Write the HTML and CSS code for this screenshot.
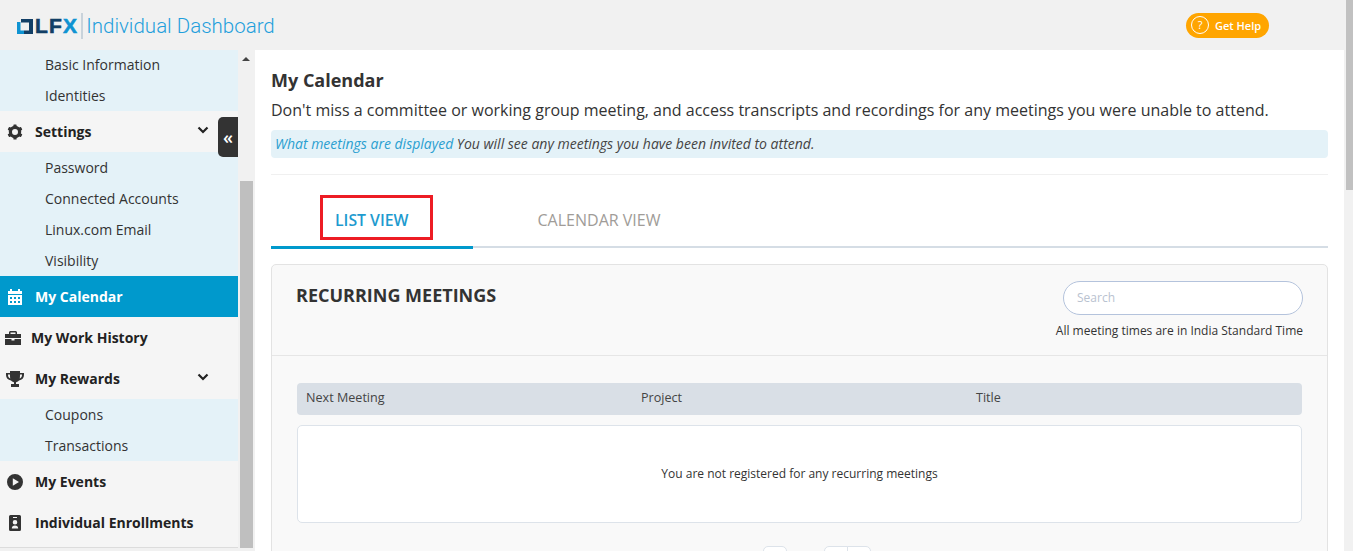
FILE: index.html
```html
<!DOCTYPE html>
<html lang="en">
<head>
  <meta charset="UTF-8">
  <meta name="viewport" content="width=device-width, initial-scale=1.0">
  <title>Individual Dashboard</title>
  <link rel="stylesheet" href="styles.css">
</head>
<body>
  <div class="page">
    <div class="viewport">
      <header class="topbar">
        <div class="logo">
          <svg class="logo-mark" width="16" height="15" viewBox="0 0 16 15"><path d="M4 0H16V15H7V11.500H12V3.500H4Z" fill="#123f66"/><path d="M0 3H3.500V11.500H7V15H0Z" fill="#0f93d2"/></svg>
          <span class="logo-lfx">LF<span class="logo-x">X</span></span>
          <span class="logo-bar"></span>
          <span class="logo-name">Individual Dashboard</span>
        </div>
        <a class="help">
          <span class="help-icon">?</span>
          Get Help
        </a>
      </header>
      <div class="workspace">
        <aside class="sidebar">
          <nav class="menu">
            <ul class="submenu submenu-top">
              <li>Basic Information</li>
              <li>Identities</li>
            </ul>
            <div class="item">
              <svg class="icon" viewBox="0 0 16 16"><g fill="#333"><circle cx="8" cy="8" r="4.6" fill="none" stroke="#333" stroke-width="3.2"/><rect x="6.400" y="0.400" width="3.200" height="3" rx=".6"/><rect x="6.400" y="12.600" width="3.200" height="3" rx=".6"/><rect x="6.400" y="0.400" width="3.200" height="3" rx=".6" transform="rotate(60 8 8)"/><rect x="6.400" y="0.400" width="3.200" height="3" rx=".6" transform="rotate(120 8 8)"/><rect x="6.400" y="0.400" width="3.200" height="3" rx=".6" transform="rotate(240 8 8)"/><rect x="6.400" y="0.400" width="3.200" height="3" rx=".6" transform="rotate(300 8 8)"/></g></svg>
              <span>Settings</span>
              <svg class="chevron" viewBox="0 0 12 8"><path d="M1.500 1.500L6 6L10.500 1.500" fill="none" stroke="#222" stroke-width="2.200"/></svg>
            </div>
            <ul class="submenu">
              <li>Password</li>
              <li>Connected Accounts</li>
              <li>Linux.com Email</li>
              <li>Visibility</li>
            </ul>
            <div class="item active">
              <svg class="icon" viewBox="0 0 16 16"><path d="M3 0H5V2H11V0H13V2H15V5H1V2H3ZM1 6H15V16H1ZM3 8V10H5V8ZM7 8V10H9V8ZM11 8V10H13V8ZM3 12V14H5V12ZM7 12V14H9V12ZM11 12V14H13V12Z" fill="#fff" fill-rule="evenodd"/></svg>
              <span>My Calendar</span>
            </div>
            <div class="item item-wide">
              <svg class="icon" viewBox="0 0 16 14"><path d="M5 0H11L12 1V3H16V7H0V3H4V1ZM5.500 1.500V3H10.500V1.500ZM0 8H6.500V9.500H9.500V8H16V14H0Z" fill="#333" fill-rule="evenodd"/></svg>
              <span>My Work History</span>
            </div>
            <div class="item item-trophy">
              <svg class="icon-trophy" viewBox="0 0 18 16"><path d="M4 0H14V2H18V4C18 7 16 9 13 9.500C12 10.500 10.500 11 10 11.500V13H13V16H5V13H8V11.500C7.500 11 6 10.500 5 9.500C2 9 0 7 0 4V2H4ZM2 3.500V4C2 5.800 3 7 4.300 7.500C4 6.500 4 5 4 3.500ZM16 3.500H14C14 5 14 6.500 13.700 7.500C15 7 16 5.800 16 4Z" fill="#333" fill-rule="evenodd"/></svg>
              <span>My Rewards</span>
              <svg class="chevron" viewBox="0 0 12 8"><path d="M1.500 1.500L6 6L10.500 1.500" fill="none" stroke="#222" stroke-width="2.200"/></svg>
            </div>
            <ul class="submenu">
              <li>Coupons</li>
              <li>Transactions</li>
            </ul>
            <div class="item">
              <svg class="icon" viewBox="0 0 16 16"><path d="M8 0A8 8 0 1 1 8 16A8 8 0 1 1 8 0ZM5.800 4.300V11.700L12 8Z" fill="#333" fill-rule="evenodd"/></svg>
              <span>My Events</span>
            </div>
            <div class="item">
              <svg class="icon" viewBox="0 0 16 16"><path d="M3.500 0H12.500Q14 0 14 1.500V14.500Q14 16 12.500 16H3.500Q2 16 2 14.500V1.500Q2 0 3.500 0ZM6 2V3H10V2ZM8 5A2.300 2.300 0 1 0 8 9.600A2.300 2.300 0 1 0 8 5ZM4.800 13.500H11.200C11.200 11.500 10 10.400 8 10.400C6 10.400 4.800 11.500 4.800 13.500Z" fill="#333" fill-rule="evenodd"/></svg>
              <span>Individual Enrollments</span>
            </div>
          </nav>
          <div class="side-rail">
            <span class="rail-arrow"></span>
            <div class="side-thumb"></div>
          </div>
          <button class="collapse">&laquo;</button>
        </aside>
        <main class="content">
          <h1>My Calendar</h1>
          <p class="lead">Don't miss a committee or working group meeting, and access transcripts and recordings for any meetings you were unable to attend.</p>
          <p class="info"><a>What meetings are displayed</a> You will see any meetings you have been invited to attend.</p>
          <hr class="divider">
          <div class="tabs">
            <div class="tab tab-active"><span class="marked">LIST VIEW</span></div>
            <div class="tab">CALENDAR VIEW</div>
          </div>
          <section class="card">
            <div class="card-head">
              <h2>RECURRING MEETINGS</h2>
              <div class="card-tools">
                <div class="search">Search</div>
                <div class="timezone">All meeting times are in India Standard Time</div>
              </div>
            </div>
            <div class="card-body">
              <div class="table-head">
                <div>Next Meeting</div>
                <div>Project</div>
                <div>Title</div>
              </div>
              <div class="empty">You are not registered for any recurring meetings</div>
              <div class="pager">
                <span class="page-btn"></span>
                <span class="page-group"><span class="page-btn"></span><span class="page-btn"></span></span>
              </div>
            </div>
          </section>
        </main>
      </div>
    </div>
    <div class="page-rail"><div class="page-thumb"></div></div>
  </div>
</body>
</html>
```
FILE: styles.css
```css
* {
  box-sizing: border-box;
}

html, body {
  height: 100%;
}

body {
  margin: 0;
  overflow: hidden;
  font-family: 'Open Sans', sans-serif;
  color: #333;
  background: #f1f1f1;
}

.page {
  display: flex;
  height: 551px;
  overflow: hidden;
}

.viewport {
  width: 1344px;
  display: flex;
  flex-direction: column;
}

/* top bar */
.topbar {
  height: 50px;
  flex: none;
  display: flex;
  align-items: center;
  justify-content: space-between;
  padding: 0 75px 0 17px;
  background: #f1f1f1;
}

.logo {
  display: flex;
  align-items: center;
  padding-top: 2px;
}

.logo-lfx {
  font-family: 'Liberation Sans', sans-serif;
  font-weight: 700;
  font-size: 21px;
  line-height: 26px;
  letter-spacing: 1.2px;
  color: #123f66;
  margin-left: 2px;
  -webkit-text-stroke: 0.6px;
}

.logo-x {
  color: #0f93d2;
}

.logo-bar {
  width: 2px;
  height: 26px;
  margin-left: 3px;
  background: #c9d3db;
}

.logo-name {
  font-family: 'Roboto', sans-serif;
  font-weight: 300;
  font-size: 20.5px;
  line-height: 26px;
  color: #1f9fdc;
  margin-left: 3px;
}

.help {
  width: 83px;
  height: 25px;
  display: flex;
  align-items: center;
  gap: 6px;
  padding-left: 5px;
  border-radius: 13px;
  background: #ffa500;
  color: #fff;
  font-size: 11px;
  font-weight: 600;
}

.help-icon {
  width: 18px;
  height: 18px;
  flex: none;
  border: 1px solid #fff;
  border-radius: 50%;
  text-align: center;
  line-height: 16px;
  font-size: 11px;
  font-weight: 400;
}

/* sidebar */
.workspace {
  flex: 1;
  display: flex;
  min-height: 0;
}

.sidebar {
  position: relative;
  width: 255px;
  flex: none;
  display: flex;
}

.menu {
  width: 238px;
  height: 498px;
  overflow: hidden;
  background: #f5f5f5;
  border-bottom: 1px solid #dcdcdc;
}

.submenu {
  list-style: none;
  margin: 0;
  padding: 0;
  background: #e4f2f8;
}

.submenu-top {
  margin-top: -1px;
}

.submenu li {
  height: 31px;
  line-height: 32px;
  padding-left: 45px;
  font-size: 14px;
  color: #333;
}

.item {
  height: 41px;
  display: flex;
  align-items: center;
  padding-left: 7px;
  font-size: 14px;
  font-weight: 700;
  color: #222;
}

.item span {
  margin-left: 12px;
}

.item-wide {
  padding-left: 5px;
}

.item-wide span {
  margin-left: 10px;
}

.item-trophy {
  padding-left: 6px;
}

.item-trophy span {
  margin-left: 11px;
}

.item.active {
  background: #0099cc;
  color: #fff;
}

.icon {
  width: 16px;
  height: 16px;
  flex: none;
}

.icon-trophy {
  width: 18px;
  height: 16px;
  flex: none;
}

.chevron {
  width: 12px;
  height: 8px;
  margin-left: auto;
  margin-right: 29px;
  margin-top: -4px;
}

.side-rail {
  width: 17px;
  padding: 0 2px;
  position: relative;
}

.rail-arrow {
  position: absolute;
  left: 4px;
  top: 7px;
  border: 4px solid transparent;
  border-top: 0;
  border-bottom: 4px solid #444;
}

.side-thumb {
  width: 13px;
  height: 367px;
  margin-top: 131px;
  background: #bfbfbf;
}

.collapse {
  position: absolute;
  left: 218px;
  top: 67px;
  width: 20px;
  height: 40px;
  padding: 0;
  border: none;
  border-radius: 5px 0 0 5px;
  background: #333;
  color: #fff;
  font-family: 'Open Sans', sans-serif;
  font-size: 18px;
  font-weight: 600;
  line-height: 34px;
}

/* main content */
.content {
  flex: 1;
  min-width: 0;
  padding: 19px 16px 0;
  background: #fff;
  overflow: hidden;
}

h1 {
  margin: 0;
  font-size: 18px;
  line-height: 22px;
  font-weight: 700;
}

.lead {
  margin: 8px 0 0;
  font-size: 16px;
  line-height: 22px;
}

.info {
  margin: 9px 0 0;
  height: 28px;
  padding-left: 4px;
  border-radius: 4px;
  background: #e4f2f8;
  color: #444;
  font-size: 14px;
  font-style: italic;
  line-height: 27px;
}

.info a {
  color: #2a9fd0;
}

.divider {
  margin: 16px 0 0;
  border: none;
  border-top: 1px solid #f0f0f0;
}

.tabs {
  display: flex;
  height: 73px;
  border-bottom: 2px solid #d5dde5;
}

.tab {
  width: 202px;
  height: 74px;
  display: flex;
  align-items: flex-end;
  justify-content: center;
  margin-left: 25px;
  padding-bottom: 18px;
  font-size: 16px;
  color: #a09c98;
}

.tab-active {
  margin-left: 0;
  padding-bottom: 6px;
  font-weight: 600;
  color: #1e9bcf;
  border-bottom: 3px solid #0099cc;
}

.marked {
  width: 113px;
  height: 45px;
  margin-left: 9px;
  padding-left: 12px;
  border: 3px solid #ed1c24;
  font-size: 15.8px;
  line-height: 44px;
}

.card {
  margin-top: 16px;
  border: 1px solid #e3e3e3;
  border-radius: 5px;
  background: #f9f9f9;
}

.card-head {
  height: 91px;
  display: flex;
  justify-content: space-between;
  padding: 16px 24px 0;
  border-bottom: 1px solid #e6e6e6;
}

h2 {
  margin: 2px 0 0;
  font-size: 18px;
  line-height: 24px;
  font-weight: 700;
}

.card-tools {
  width: 250px;
  display: flex;
  flex-direction: column;
  align-items: flex-end;
}

.search {
  width: 240px;
  height: 34px;
  padding-left: 13px;
  border: 1px solid #b4c3dc;
  border-radius: 17px;
  background: #fff;
  color: #b9c2d0;
  font-size: 12px;
  line-height: 31px;
}

.timezone {
  margin-top: 7px;
  font-size: 12px;
  line-height: 18px;
  white-space: nowrap;
}

.card-body {
  padding: 27px 25px 0;
}

.table-head {
  height: 32px;
  display: grid;
  grid-template-columns: repeat(3, 335px);
  padding-left: 9px;
  border-radius: 4px;
  background: #d9dfe6;
  font-size: 12.6px;
  color: #444;
  line-height: 29px;
}

.empty {
  height: 98px;
  margin-top: 10px;
  border: 1px solid #dde3ea;
  border-radius: 5px;
  background: #fff;
  text-align: center;
  font-size: 12px;
  line-height: 96px;
}

.pager {
  display: flex;
  gap: 37px;
  margin-top: 23px;
  padding-left: 466px;
}

.page-group {
  display: flex;
}

.page-btn {
  display: block;
  width: 24px;
  height: 30px;
  border: 1px solid #dde3ea;
  border-radius: 5px;
  background: #fff;
}

.page-group .page-btn {
  border-radius: 5px 0 0 5px;
}

.page-group .page-btn + .page-btn {
  margin-left: -1px;
  border-radius: 0 5px 5px 0;
}

.page-rail {
  flex: 1;
  padding-left: 2px;
}

.page-thumb {
  height: 190px;
  background: #c1c1c1;
}
```
